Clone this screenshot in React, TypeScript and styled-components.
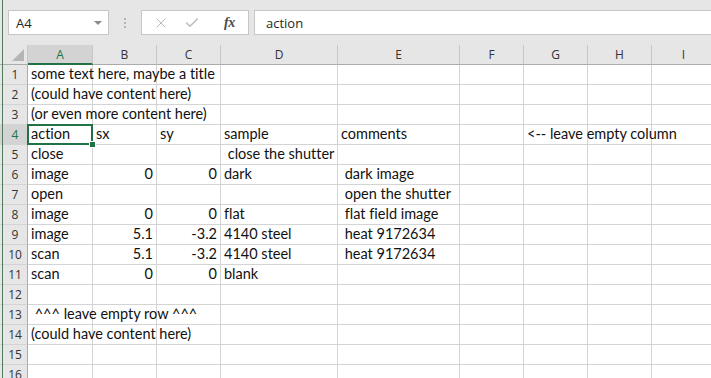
import React from 'react';
import styled, { createGlobalStyle, css } from 'styled-components';
import { X, Check } from 'lucide-react';

const GlobalStyle = createGlobalStyle`
  html, body {
    margin: 0;
    padding: 0;
    background: #ffffff;
    overflow: hidden;
  }
`;

const COLS = [
  { name: 'A', width: 65 },
  { name: 'B', width: 64 },
  { name: 'C', width: 64 },
  { name: 'D', width: 117 },
  { name: 'E', width: 122 },
  { name: 'F', width: 64 },
  { name: 'G', width: 64 },
  { name: 'H', width: 64 },
  { name: 'I', width: 64 },
];

type Cell = { text: string; num?: boolean };

// row number -> column index -> cell
const DATA: Record<number, Record<number, Cell>> = {
  1: { 0: { text: 'some text here, maybe a title' } },
  2: { 0: { text: '(could have content here)' } },
  3: { 0: { text: '(or even more content here)' } },
  4: {
    0: { text: 'action' },
    1: { text: 'sx' },
    2: { text: 'sy' },
    3: { text: 'sample' },
    4: { text: 'comments' },
    6: { text: '<-- leave empty column' },
  },
  5: { 0: { text: 'close' }, 3: { text: ' close the shutter' } },
  6: {
    0: { text: 'image' },
    1: { text: '0', num: true },
    2: { text: '0', num: true },
    3: { text: 'dark' },
    4: { text: ' dark image' },
  },
  7: { 0: { text: 'open' }, 4: { text: ' open the shutter' } },
  8: {
    0: { text: 'image' },
    1: { text: '0', num: true },
    2: { text: '0', num: true },
    3: { text: 'flat' },
    4: { text: ' flat field image' },
  },
  9: {
    0: { text: 'image' },
    1: { text: '5.1', num: true },
    2: { text: '-3.2', num: true },
    3: { text: '4140 steel' },
    4: { text: ' heat 9172634' },
  },
  10: {
    0: { text: 'scan' },
    1: { text: '5.1', num: true },
    2: { text: '-3.2', num: true },
    3: { text: '4140 steel' },
    4: { text: ' heat 9172634' },
  },
  11: {
    0: { text: 'scan' },
    1: { text: '0', num: true },
    2: { text: '0', num: true },
    3: { text: 'blank' },
  },
  13: { 0: { text: ' ^^^ leave empty row ^^^' } },
  14: { 0: { text: '(could have content here)' } },
};

const ROWS = Array.from({ length: 16 }, (_, i) => i + 1);

const Page = styled.div`
  position: relative;
  width: 711px;
  height: 378px;
  overflow: hidden;
  background: #e6e6e6;

  &::after {
    content: '';
    position: absolute;
    left: 2px;
    top: 0;
    bottom: 0;
    width: 1px;
    background: #4f7a5c;
  }
`;

const FormulaBar = styled.div`
  display: flex;
  align-items: center;
  height: 25px;
  padding: 10px 0 10px 8px;
`;

const NameBox = styled.div`
  box-sizing: border-box;
  width: 101px;
  height: 25px;
  background: #fff;
  border: 1px solid #c6c6c6;
  display: flex;
  align-items: center;
  justify-content: space-between;
  padding: 0 6px 0 7px;
  font-family: 'Open Sans', 'Noto Sans', sans-serif;
  font-size: 13px;
  color: #262626;
`;

const Caret = styled.span`
  width: 0;
  height: 0;
  border-left: 4px solid transparent;
  border-right: 4px solid transparent;
  border-top: 4px solid #8a8a8a;
`;

const Grip = styled.div`
  width: 32px;
  display: flex;
  flex-direction: column;
  align-items: center;
  gap: 2px;

  span {
    width: 2px;
    height: 2px;
    background: #b4b4b4;
  }
`;

const ActionBox = styled.div`
  box-sizing: border-box;
  width: 108px;
  height: 25px;
  background: #fff;
  border: 1px solid #c6c6c6;
  display: flex;
  align-items: center;
  padding: 0 0 0 11px;
  gap: 15px;
  color: #b8b8b8;
`;

const Fx = styled.span`
  margin-left: 9px;
  font-family: 'Liberation Serif', serif;
  font-style: italic;
  font-weight: bold;
  font-size: 14px;
  color: #4a4a4a;
  letter-spacing: -0.5px;
`;

const FormulaInput = styled.div`
  box-sizing: border-box;
  flex: 1;
  height: 25px;
  margin-left: 5px;
  background: #fff;
  border: 1px solid #c6c6c6;
  border-right: none;
  display: flex;
  align-items: center;
  padding-left: 11px;
  font-family: 'Open Sans', 'Noto Sans', sans-serif;
  font-size: 13px;
  color: #262626;
`;

const Grid = styled.div`
  display: grid;
  grid-template-columns: 28px ${COLS.map((c) => `${c.width}px`).join(' ')};
  grid-auto-rows: 20px;
  background: #fff;
`;

const Corner = styled.div`
  background: #e6e6e6;
  border-right: 1px solid #c8c8c8;
  border-bottom: 1px solid #ababab;
  display: flex;
  align-items: flex-end;
  justify-content: flex-end;
  padding: 0 3px 3px 0;
`;

const ColHead = styled.div<{ $active?: boolean }>`
  box-sizing: border-box;
  background: ${(p) => (p.$active ? '#d3d3d3' : '#e6e6e6')};
  border-right: 1px solid #c8c8c8;
  border-bottom: ${(p) => (p.$active ? '2px solid #217346' : '1px solid #ababab')};
  display: flex;
  align-items: center;
  justify-content: center;
  font-family: 'Open Sans', 'Noto Sans', sans-serif;
  font-size: 12px;
  color: ${(p) => (p.$active ? '#217346' : '#333')};
`;

const RowHead = styled.div<{ $active?: boolean }>`
  box-sizing: border-box;
  background: ${(p) => (p.$active ? '#d3d3d3' : '#e6e6e6')};
  border-right: 1px solid #ababab;
  border-bottom: 1px solid #d4d4d4;
  display: flex;
  align-items: center;
  justify-content: center;
  padding-left: 3px;
  font-family: 'Open Sans', 'Noto Sans', sans-serif;
  font-size: 12px;
  color: ${(p) => (p.$active ? '#217346' : '#333')};
`;

const CellBox = styled.div<{ $num?: boolean; $selected?: boolean }>`
  position: relative;
  box-sizing: border-box;
  border-right: 1px solid #d4d4d4;
  border-bottom: 1px solid #d4d4d4;
  padding: 0 3px 0 3px;
  display: flex;
  align-items: center;
  justify-content: ${(p) => (p.$num ? 'flex-end' : 'flex-start')};
  font-family: Lato, 'Open Sans', sans-serif;
  font-size: 14.5px;
  font-variant-ligatures: none;
  color: #111;
  white-space: pre;
  overflow: visible;
  line-height: 1;

  ${(p) =>
    p.$selected &&
    css`
      z-index: 2;
      &::before {
        content: '';
        position: absolute;
        left: -1px;
        top: -1px;
        right: -1px;
        bottom: -1px;
        border: 2px solid #217346;
        pointer-events: none;
      }
      &::after {
        content: '';
        position: absolute;
        right: -4px;
        bottom: -4px;
        width: 5px;
        height: 5px;
        background: #217346;
        border: 1px solid #fff;
      }
    `}
`;

const Text = styled.span`
  position: relative;
  z-index: 1;
`;

export default function App() {
  return (
    <>
      <GlobalStyle />
      <Page>
        <FormulaBar>
          <NameBox>
            A4
            <Caret />
          </NameBox>
          <Grip>
            <span />
            <span />
            <span />
          </Grip>
          <ActionBox>
            <X size={16} strokeWidth={1.5} />
            <Check size={16} strokeWidth={2} />
            <Fx>fx</Fx>
          </ActionBox>
          <FormulaInput>action</FormulaInput>
        </FormulaBar>
        <Grid>
          <Corner>
            <svg width="12" height="12" viewBox="0 0 12 12">
              <polygon points="12,0 12,12 0,12" fill="#b5b5b5" />
            </svg>
          </Corner>
          {COLS.map((c) => (
            <ColHead key={c.name} $active={c.name === 'A'}>
              {c.name}
            </ColHead>
          ))}
          {ROWS.map((r) => (
            <React.Fragment key={r}>
              <RowHead $active={r === 4}>{r}</RowHead>
              {COLS.map((c, ci) => {
                const cell = DATA[r]?.[ci];
                return (
                  <CellBox key={c.name} $num={cell?.num} $selected={r === 4 && ci === 0}>
                    {cell && <Text>{cell.text}</Text>}
                  </CellBox>
                );
              })}
            </React.Fragment>
          ))}
        </Grid>
      </Page>
    </>
  );
}
